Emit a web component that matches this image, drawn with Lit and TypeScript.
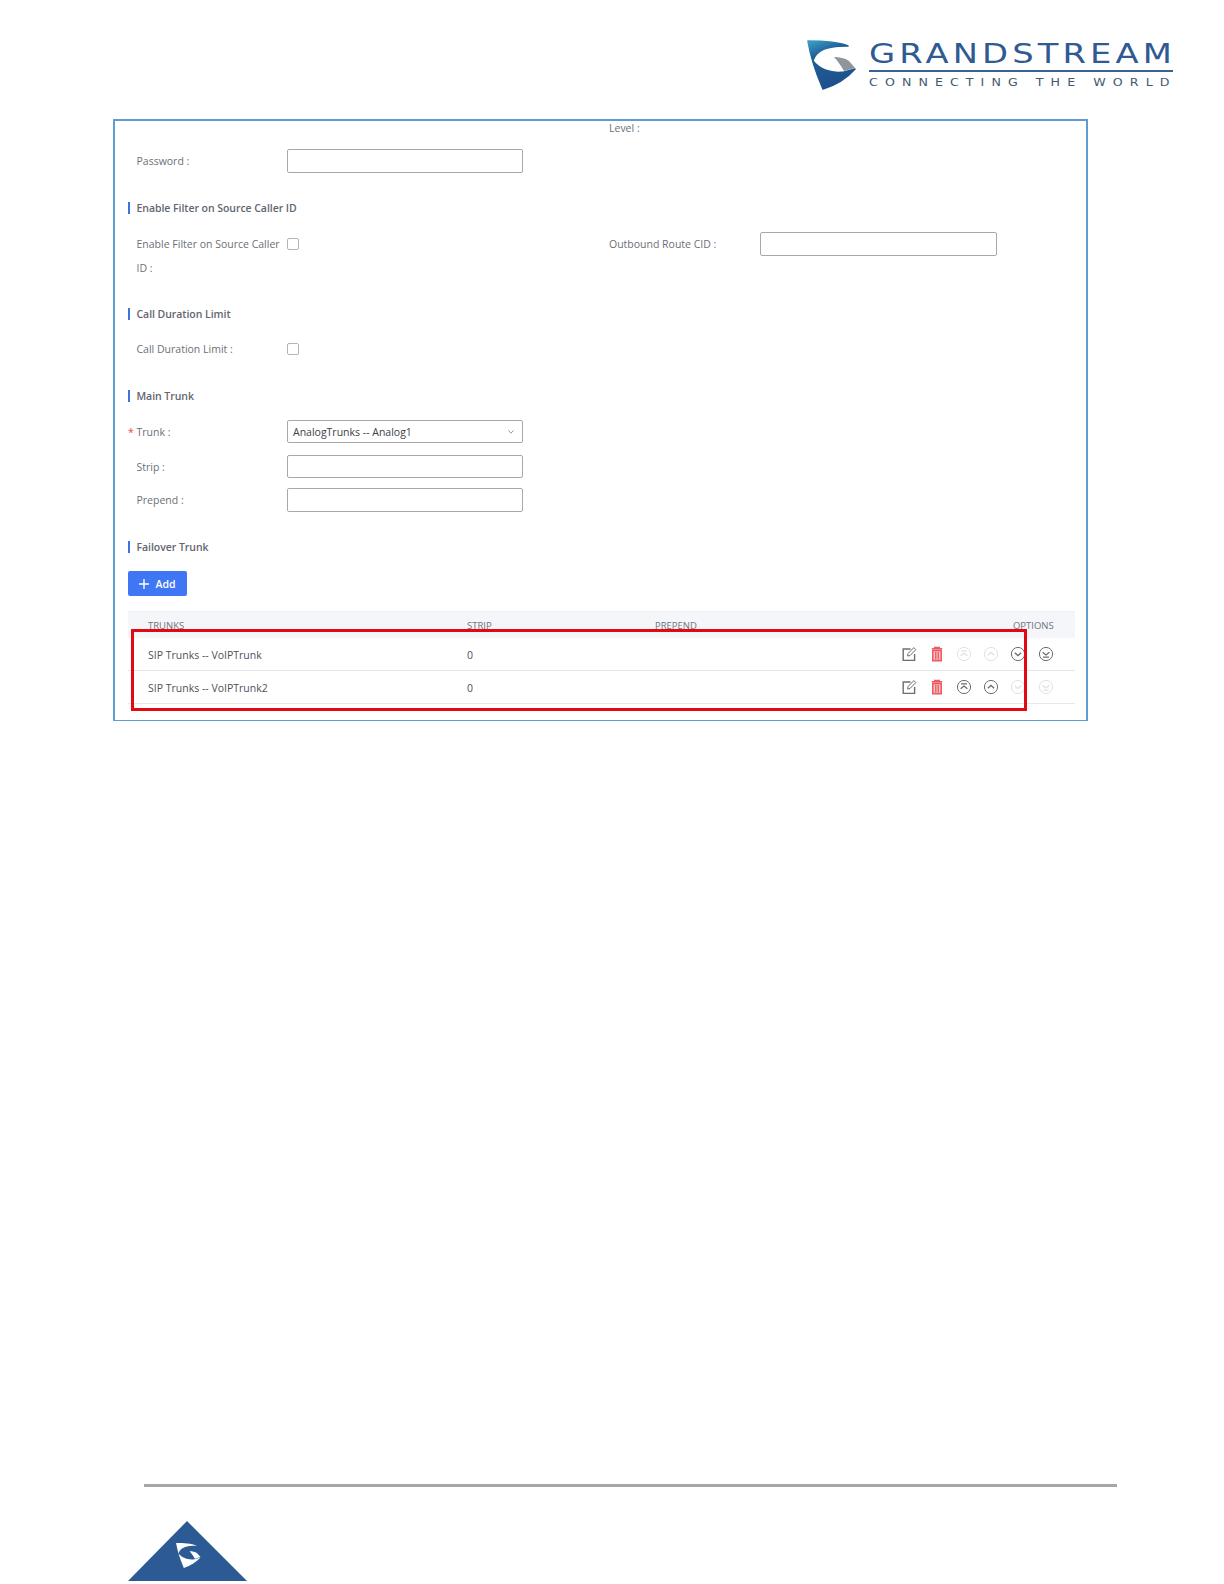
import { LitElement, html, css } from "lit";
import { customElement } from "lit/decorators.js";

const circleIcon = (kind: string, on: boolean) => {
  const paths: Record<string, string> = {
    top: "M4.6 9.8 8 7l3.4 2.8M5 4.8h6",
    up: "M4.8 9.3 8 6.4l3.2 2.9",
    down: "M4.8 6.7 8 9.6l3.2-2.9",
    bottom: "M4.6 6.2 8 9l3.4-2.8M5 11.2h6",
  };
  return html`<svg class="ic ${on ? "on" : "off"}" viewBox="0 0 16 16" width="16" height="16">
    <circle cx="8" cy="8" r="6.6" fill="none" stroke="currentColor" stroke-width="1"></circle>
    <path d=${paths[kind]} fill="none" stroke="currentColor" stroke-width="1.3"></path>
  </svg>`;
};

const editIcon = html`<svg class="ic edit" viewBox="0 0 16 16" width="16" height="16">
  <path d="M9.5 3H2.2v11.4h11.4V8" fill="none" stroke="currentColor" stroke-width="1.4"></path>
  <path d="M6.6 10 7 7.6 12.8 1.6l2 2L9 9.6z" fill="#fff" stroke="currentColor" stroke-width="1"></path>
</svg>`;

const trashIcon = html`<svg class="ic trash" viewBox="0 0 16 16" width="16" height="16">
  <path d="M2.8 2.8h10.4M5.8 2.6V1.4h4.4v1.2" fill="none" stroke="currentColor" stroke-width="1.5"></path>
  <path d="M3.8 4.4h8.4v10.2H3.8z" fill="#fbd0d3" stroke="currentColor" stroke-width="1.6"></path>
  <path d="M6.4 5.5v8M8 5.5v8M9.6 5.5v8" stroke="currentColor" stroke-width="1"></path>
</svg>`;

const markBody = "M2 2C16 2 32 3 42 7 30 7 19 8 13 13 10 15 8 18 7 22 13 30 25 35 38 33L49 30C42 38 30 46 17 50 11 36 5 20 2 2Z";
const markGrey = "M28 18C33 18 39 19 43 22L49 29 38 32C35 27 32 22 28 18Z";

@customElement("app-root")
export class AppRoot extends LitElement {
  static styles = css`
    :host { display: block; height: 1584px; background: #fff; font-family: "Open Sans", "Liberation Sans", sans-serif; font-size: 10.5px; color: #6b7078; overflow: hidden; position: relative; }
    .head { height: 119px; box-sizing: border-box; padding: 39px 0 0 806px; display: flex; gap: 11.5px; }
    .wordmark { width: 304px; display: flex; flex-direction: column; color: #2f5a92; font-family: "DejaVu Sans", sans-serif; white-space: nowrap; }
    .gs { font-size: 27px; line-height: 30px; letter-spacing: 3.3px; height: 29px; transform: scaleX(1.25); transform-origin: left center; }
    .rule { height: 2px; background: #3a6297; margin-top: 2px; }
    .tag { font-size: 10.5px; line-height: 12px; letter-spacing: 5.9px; margin-top: 4px; color: #44586f; transform: scaleX(1.2); transform-origin: left center; }

    .panel { position: relative; margin-left: 113px; width: 975px; height: 602px; box-sizing: border-box; border: 2px solid #619bcf; border-bottom-width: 1px; padding-left: 13px; padding-right: 11px; }
    .row { display: flex; align-items: center; }
    .lab { width: 159px; padding-left: 8.5px; box-sizing: border-box; flex: none; position: relative; }
    .out { width: 151px; padding-left: 0; margin-left: 310px; }
    .col2 { margin-left: 481px; }
    .field { width: 236px; height: 24px; box-sizing: border-box; border: 1px solid #a8a8a8; border-radius: 2px; background: #fff; }
    .wide { width: 237px; }
    .level { height: 14px; }
    .pw { margin-top: 14px; height: 24px; }
    .sec { height: 20px; display: flex; align-items: center; font-weight: 600; color: #5f6670; position: relative; padding-left: 8.5px; letter-spacing: -0.05px; }
    .sec::before { content: ""; position: absolute; left: 0; top: 4px; width: 2px; height: 12px; background: #3f75d8; }
    .s1 { margin-top: 25px; }
    .filter { margin-top: 14px; align-items: flex-start; height: 46px; }
    .filter .lab { line-height: 24px; }
    .check { width: 12px; height: 12px; box-sizing: border-box; border: 1px solid #b5b5b5; border-radius: 2px; flex: none; }
    .filter .check { margin-top: 6px; }
    .s2 { margin-top: 26px; }
    .call { margin-top: 13px; height: 24px; }
    .s3 { margin-top: 25px; }
    .trunk { margin-top: 14px; height: 23px; }
    .trunk .field, .strip .field { height: 23px; }
    .req { position: absolute; left: 0; color: #e5484d; }
    .select { display: flex; align-items: center; justify-content: space-between; color: #3d4146; padding: 0 7px 0 5px; }
    .strip { margin-top: 12px; height: 23px; }
    .prep { margin-top: 10px; height: 24px; }
    .s4 { margin-top: 25px; }
    .add { margin-top: 14px; width: 59px; height: 25px; background: #3f76f3; border-radius: 2px; color: #fff; display: flex; align-items: center; justify-content: center; gap: 6px; border: none; padding: 0; font: inherit; font-weight: 600; }
    .table { margin-top: 15px; width: 947px; }
    .tr { display: grid; grid-template-columns: 319px 188px 1fr; padding: 0 21.3px 0 20px; align-items: center; }
    .th { height: 27px; background: #f4f6f9; border-top: 1px solid #eceff3; box-sizing: border-box; color: #6f747c; font-size: 9.5px; }
    .hh { display: flex; justify-content: space-between; }
    .td { height: 33px; box-sizing: border-box; border-bottom: 1px solid #e6e8eb; color: #4d5258; padding-top: 2px; }
    .ops { display: flex; justify-content: flex-end; gap: 11.3px; margin-top: -3px; }
    .ic { display: block; flex: none; }
    .ic.on, .ic.edit { color: #6a6e73; }
    .ic.off { color: #dfe2e5; }
    .ic.trash { color: #ee5a63; }
    .red { position: absolute; left: 131px; top: 629px; width: 896px; height: 82px; box-sizing: border-box; border: 3px solid #e20a12; pointer-events: none; }

    .line { position: absolute; left: 144px; top: 1484px; width: 973px; height: 3px; background: #a6a6a6; }
    .tri { position: absolute; left: 128px; top: 1521px; display: block; }
  `;

  private row(name: string, ops: boolean[]) {
    const kinds = ["top", "up", "down", "bottom"];
    return html`<div class="tr td">
      <span>${name}</span><span>0</span>
      <div class="ops">${editIcon}${trashIcon}${kinds.map((k, i) => circleIcon(k, ops[i]))}</div>
    </div>`;
  }

  render() {
    return html`
      <div class="head">
        <svg width="51" height="52" viewBox="0 0 51 52">
          <defs>
            <linearGradient id="g" x1="0.1" y1="0" x2="0.5" y2="1">
              <stop offset="0" stop-color="#3b9ac4"></stop>
              <stop offset="0.3" stop-color="#1f5f96"></stop>
              <stop offset="1" stop-color="#1d4f8d"></stop>
            </linearGradient>
          </defs>
          <path d=${markBody} fill="url(#g)" stroke="url(#g)" stroke-width="1.6" stroke-linejoin="round"></path>
          <path d=${markGrey} fill="#8f959b"></path>
        </svg>
        <div class="wordmark">
          <div class="gs">GRANDSTREAM</div>
          <div class="rule"></div>
          <div class="tag">CONNECTING THE WORLD</div>
        </div>
      </div>

      <div class="panel">
        <div class="row level"><span class="col2">Level :</span></div>
        <div class="row pw"><span class="lab">Password :</span><div class="field"></div></div>

        <div class="sec s1">Enable Filter on Source Caller ID</div>
        <div class="row filter">
          <span class="lab">Enable Filter on Source Caller ID :</span>
          <div class="check"></div>
          <span class="lab out">Outbound Route CID :</span>
          <div class="field wide"></div>
        </div>

        <div class="sec s2">Call Duration Limit</div>
        <div class="row call"><span class="lab">Call Duration Limit :</span><div class="check"></div></div>

        <div class="sec s3">Main Trunk</div>
        <div class="row trunk">
          <span class="lab"><span class="req">*</span>Trunk :</span>
          <div class="field select">AnalogTrunks -- Analog1
            <svg width="8" height="6" viewBox="0 0 8 6"><path d="M1.5 1.5 4 4.2 6.5 1.5" fill="none" stroke="#999" stroke-width="1"></path></svg>
          </div>
        </div>
        <div class="row strip"><span class="lab">Strip :</span><div class="field"></div></div>
        <div class="row prep"><span class="lab">Prepend :</span><div class="field"></div></div>

        <div class="sec s4">Failover Trunk</div>
        <button class="add">
          <svg width="10" height="10" viewBox="0 0 10 10"><path d="M5 0v10M0 5h10" stroke="#fff" stroke-width="1.4"></path></svg>
          Add
        </button>

        <div class="table">
          <div class="tr th"><span>TRUNKS</span><span>STRIP</span><span class="hh"><span>PREPEND</span><span>OPTIONS</span></span></div>
          ${this.row("SIP Trunks -- VoIPTrunk", [false, false, true, true])}
          ${this.row("SIP Trunks -- VoIPTrunk2", [true, true, false, false])}
        </div>
      </div>

      <div class="red"></div>
      <div class="line"></div>
      <svg class="tri" width="119" height="60" viewBox="0 0 119 60">
        <path d="M59 0 119 60H0Z" fill="#2c5a94"></path>
        <g transform="translate(47 21) scale(.52)">
          <path d=${markBody} fill="#fff"></path>
          <path d=${markGrey} fill="#fff"></path>
        </g>
      </svg>
    `;
  }
}
